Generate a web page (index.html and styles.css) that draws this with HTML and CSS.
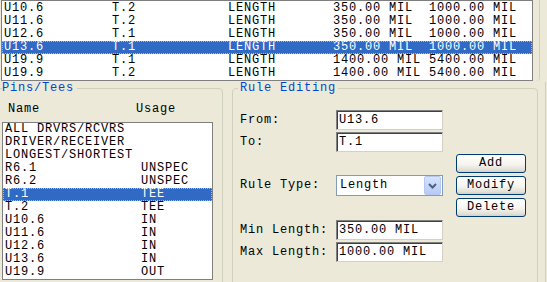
FILE: index.html
```html
<!DOCTYPE html>
<html>
<head>
<meta charset="utf-8">
<link rel="stylesheet" href="styles.css">
</head>
<body>
<div class="top-frame">
  <div class="rules-list">
    <div class="row"><span>U10.6</span><span>T.2</span><span>LENGTH</span><span>350.00 MIL</span><span>1000.00 MIL</span></div>
    <div class="row"><span>U11.6</span><span>T.2</span><span>LENGTH</span><span>350.00 MIL</span><span>1000.00 MIL</span></div>
    <div class="row"><span>U12.6</span><span>T.1</span><span>LENGTH</span><span>350.00 MIL</span><span>1000.00 MIL</span></div>
    <div class="row sel"><span>U13.6</span><span>T.1</span><span>LENGTH</span><span>350.00 MIL</span><span>1000.00 MIL</span></div>
    <div class="row"><span>U19.9</span><span>T.1</span><span>LENGTH</span><span>1400.00 MIL</span><span>5400.00 MIL</span></div>
    <div class="row"><span>U19.9</span><span>T.2</span><span>LENGTH</span><span>1400.00 MIL</span><span>5400.00 MIL</span></div>
  </div>
</div>
<div class="bottom">
  <fieldset class="group pins">
    <legend>Pins/Tees</legend>
    <div class="pins-head"><span>Name</span><span>Usage</span></div>
    <div class="pins-list">
      <div class="item"><span>ALL DRVRS/RCVRS</span><span></span></div>
      <div class="item"><span>DRIVER/RECEIVER</span><span></span></div>
      <div class="item"><span>LONGEST/SHORTEST</span><span></span></div>
      <div class="item"><span>R6.1</span><span>UNSPEC</span></div>
      <div class="item"><span>R6.2</span><span>UNSPEC</span></div>
      <div class="item sel"><span>T.1</span><span>TEE</span></div>
      <div class="item"><span>T.2</span><span>TEE</span></div>
      <div class="item"><span>U10.6</span><span>IN</span></div>
      <div class="item"><span>U11.6</span><span>IN</span></div>
      <div class="item"><span>U12.6</span><span>IN</span></div>
      <div class="item"><span>U13.6</span><span>IN</span></div>
      <div class="item"><span>U19.9</span><span>OUT</span></div>
    </div>
  </fieldset>
  <fieldset class="group rule">
    <legend>Rule Editing</legend>
    <div class="form">
      <label class="lbl l-from">From:</label>
      <input class="field f-from" type="text" value="U13.6" readonly>
      <label class="lbl l-to">To:</label>
      <input class="field f-to" type="text" value="T.1" readonly>
      <button class="btn b-add">Add</button>
      <label class="lbl l-type">Rule Type:</label>
      <div class="combo">
        <span class="combo-text">Length</span>
        <span class="combo-arrow">
          <svg width="9" height="6" viewBox="0 0 9 6"><path d="M1 1 L4.5 4.5 L8 1" fill="none" stroke="#4D6185" stroke-width="2"/></svg>
        </span>
      </div>
      <button class="btn b-mod">Modify</button>
      <button class="btn b-del">Delete</button>
      <label class="lbl l-min">Min Length:</label>
      <input class="field f-min" type="text" value="350.00 MIL" readonly>
      <label class="lbl l-max">Max Length:</label>
      <input class="field f-max" type="text" value="1000.00 MIL" readonly>
    </div>
  </fieldset>
</div>
</body>
</html>
```

FILE: styles.css
```css
* { box-sizing: border-box; }
html, body { margin: 0; padding: 0; }
body {
  width: 547px;
  height: 282px;
  overflow: hidden;
  background: #ECE9D8;
  font-family: "Liberation Mono", "Courier New", monospace;
  font-size: 12px;
  letter-spacing: 0.8px;
  line-height: 13px;
  color: #000;
}

/* top rules list */
.top-frame {
  width: 540px;
  height: 81px;
  padding-left: 1px;
  border-right: 1px solid #D0D0BF;
  border-bottom-right-radius: 4px;
}
.rules-list {
  width: 532px;
  height: 81px;
  background: #fff;
  border: 1px solid #7F7F7F;
  padding-top: 1px;
  overflow: hidden;
}
.row {
  display: grid;
  grid-template-columns: 108px 116px 105px 96px 1fr;
  height: 13px;
  white-space: pre;
}
.row span { padding-left: 2px; }
.sel {
  background: #316AC5;
  color: #fff;
  outline: 1px dotted #9DB6E6;
  outline-offset: -1px;
}

/* bottom area */
.bottom {
  display: flex;
  margin-top: 1px;
  width: 546px;
  height: 200px;
  overflow: hidden;
  border-right: 1px solid #D0D0BF;
}
.group {
  margin: 0;
  border: 1px solid #D0D0BF;
  border-radius: 4px;
  min-width: 0;
  height: 212px;
  flex: none;
}
.group legend {
  color: #0046D5;
  line-height: 13px;
}
.pins {
  margin-left: -8px;
  width: 231px;
  padding: 8px 8px 0 9px;
}
.pins legend { padding: 0 3px 0 0; }
.rule {
  margin-left: 9px;
  width: 306px;
  padding: 15px 0 0 5px;
}
.rule legend { padding: 0 2px; }

.pins-head {
  display: grid;
  grid-template-columns: 128px 1fr;
  padding-left: 6px;
  height: 13px;
  margin-bottom: 6px;
}
.pins-list {
  width: 211px;
  height: 158px;
  background: #fff;
  border: 1px solid #7F7F7F;
  overflow: hidden;
}
.item {
  display: grid;
  grid-template-columns: 136px 1fr;
  height: 13px;
  padding-left: 2px;
  white-space: pre;
}

/* form */
.form {
  display: grid;
  margin-left: 2px;
  grid-template-columns: 96px 107px 13px 70px;
  grid-template-rows: 22px 20px 23px 22px 23px 22px 20px;
}
.lbl {
  height: 20px;
  line-height: 20px;
  align-self: start;
  grid-column: 1;
}
.l-from { grid-row: 1; }
.l-to { grid-row: 2; }
.l-type { grid-row: 4; height: 21px; line-height: 21px; }
.l-min { grid-row: 6; }
.l-max { grid-row: 7; }

.field {
  grid-column: 2;
  align-self: start;
  width: 107px;
  height: 20px;
  margin: 0;
  padding: 0 0 0 2px;
  font-family: inherit;
  font-size: 12px;
  letter-spacing: 0.8px;
  color: #000;
  background: #fff;
  border: 1px solid;
  border-color: #808080 #D4D0C8 #D4D0C8 #808080;
  box-shadow: inset 1px 1px 0 #404040;
  outline: none;
}
.f-from { grid-row: 1; }
.f-to { grid-row: 2; }
.f-min { grid-row: 6; }
.f-max { grid-row: 7; }

.combo {
  grid-row: 4;
  grid-column: 2;
  align-self: start;
  height: 21px;
  display: flex;
  align-items: center;
  justify-content: space-between;
  background: #fff;
  border: 1px solid #7F9DB9;
  padding: 0 1px 0 3px;
}
.combo-arrow {
  width: 17px;
  height: 19px;
  display: flex;
  align-items: center;
  justify-content: center;
  border: 1px solid #B5C8F2;
  border-radius: 2px;
  background: linear-gradient(#D6E3FD, #B7CAF5);
}

.btn {
  grid-column: 4;
  align-self: start;
  width: 70px;
  height: 19px;
  margin: 0;
  padding: 0;
  font-family: inherit;
  font-size: 12px;
  letter-spacing: 0.8px;
  line-height: 17px;
  color: #000;
  border: 1px solid #003C74;
  border-radius: 3px;
  background: linear-gradient(#FFFFFF, #F5F4EF 55%, #E3E1D8 85%, #D6D0C5);
}
.b-add { grid-row: 3; margin-top: 2px; }
.b-mod { grid-row: 4; margin-top: 1px; }
.b-del { grid-row: 5; margin-top: 1px; }
```
